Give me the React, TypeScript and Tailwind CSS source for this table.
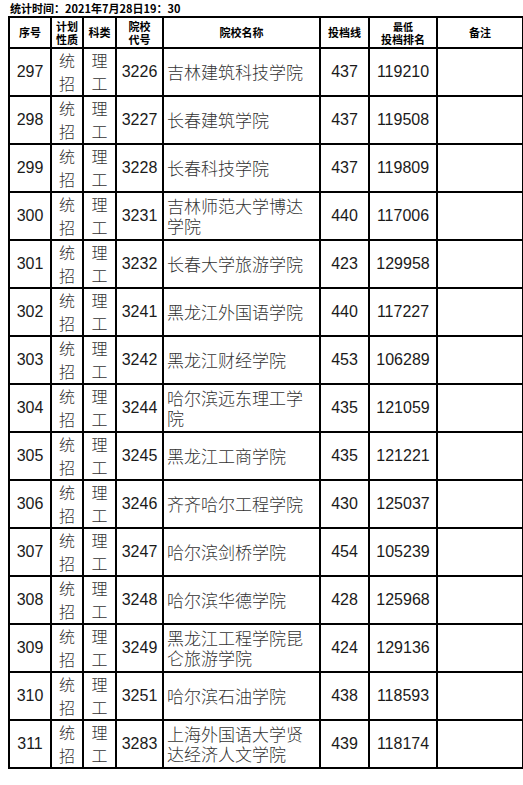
const rows: [string, string, string[], string, string][] = [
  ["297", "3226", ["吉林建筑科技学院"], "437", "119210"],
  ["298", "3227", ["长春建筑学院"], "437", "119508"],
  ["299", "3228", ["长春科技学院"], "437", "119809"],
  ["300", "3231", ["吉林师范大学博达", "学院"], "440", "117006"],
  ["301", "3232", ["长春大学旅游学院"], "423", "129958"],
  ["302", "3241", ["黑龙江外国语学院"], "440", "117227"],
  ["303", "3242", ["黑龙江财经学院"], "453", "106289"],
  ["304", "3244", ["哈尔滨远东理工学", "院"], "435", "121059"],
  ["305", "3245", ["黑龙江工商学院"], "435", "121221"],
  ["306", "3246", ["齐齐哈尔工程学院"], "430", "125037"],
  ["307", "3247", ["哈尔滨剑桥学院"], "454", "105239"],
  ["308", "3248", ["哈尔滨华德学院"], "428", "125968"],
  ["309", "3249", ["黑龙江工程学院昆", "仑旅游学院"], "424", "129136"],
  ["310", "3251", ["哈尔滨石油学院"], "438", "118593"],
  ["311", "3283", ["上海外国语大学贤", "达经济人文学院"], "439", "118174"],
];

const num = "font-['Liberation_Sans',Arial,sans-serif] text-[16px] text-[#1a1a1a] text-center";
const cjk = "font-['Noto_Sans_CJK_SC',sans-serif] font-light text-[#333]";
const head = "border-2 border-black font-['Noto_Sans_CJK_SC',sans-serif] font-bold text-[11px] leading-[13px] text-black text-center align-middle";
const cell = "border-2 border-black h-[48px] p-0 align-middle";

export default function App() {
  return (
    <div className="w-[523px] h-[785px] bg-white overflow-hidden">
      <div className="h-[16px] pl-[10px] pt-[1px] font-['Noto_Sans_CJK_SC',sans-serif] font-bold text-[11px] leading-[14px] text-black">
        统计时间：2021年7月28日19：30
      </div>
      <table className="ml-[8px] w-[514px] table-fixed border-collapse">
        <colgroup>
          <col className="w-[42px]" />
          <col className="w-[32px]" />
          <col className="w-[33px]" />
          <col className="w-[47px]" />
          <col className="w-[157px]" />
          <col className="w-[49px]" />
          <col className="w-[68px]" />
          <col className="w-[86px]" />
        </colgroup>
        <thead>
          <tr>
            <th className={`${head} h-[31px] p-0`}>序号</th>
            <th className={`${head} p-0`}>计划<br />性质</th>
            <th className={`${head} p-0`}>科类</th>
            <th className={`${head} p-0`}>院校<br />代号</th>
            <th className={`${head} p-0`}>院校名称</th>
            <th className={`${head} p-0`}>投档线</th>
            <th className={`${head} p-0`}>
              <span className="text-[10px]">最低</span>
              <br />
              投档排名
            </th>
            <th className={`${head} p-0`}>备注</th>
          </tr>
        </thead>
        <tbody>
          {rows.map(([id, code, name, line, rank]) => (
            <tr key={id}>
              <td className={`${cell} ${num}`}>{id}</td>
              <td className={`${cell} ${cjk} text-[16px] leading-[23px] text-center`}>统<br />招</td>
              <td className={`${cell} ${cjk} text-[16px] leading-[23px] text-center`}>理<br />工</td>
              <td className={`${cell} ${num}`}>{code}</td>
              <td className={`${cell} ${cjk} text-[17px] leading-[20px] pl-[3px] whitespace-nowrap`}>
                {name.map((n, i) => (
                  <div key={i}>{n}</div>
                ))}
              </td>
              <td className={`${cell} ${num}`}>{line}</td>
              <td className={`${cell} ${num}`}>{rank}</td>
              <td className={cell}></td>
            </tr>
          ))}
        </tbody>
      </table>
    </div>
  );
}
